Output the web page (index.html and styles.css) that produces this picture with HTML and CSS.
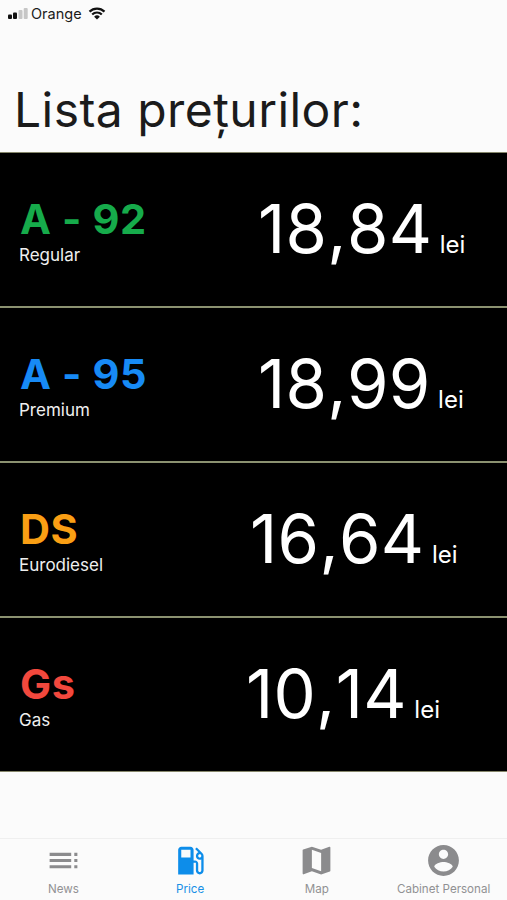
FILE: index.html
```html
<!DOCTYPE html>
<html lang="ro">
<head>
<meta charset="utf-8">
<title>Lista prețurilor</title>
<link rel="stylesheet" href="styles.css">
</head>
<body>
<div class="status">
  <svg class="signal" viewBox="0 0 20 12"><rect x="0" y="6.5" width="4" height="4.5" rx="1"/><rect x="5" y="4.5" width="4" height="6.5" rx="1"/><rect class="dim" x="10.5" y="2" width="4" height="9" rx="1"/><rect class="dim" x="15.7" y="0" width="4" height="11" rx="1"/></svg>
  <span class="carrier">Orange</span>
  <svg class="wifi" viewBox="0 0 18 13"><path d="M1.5 4.6a10.8 10.8 0 0 1 15 0M4.2 7.5a6.8 6.8 0 0 1 9.6 0"/><path class="dot" d="M9 12.5 6.1 9.8a4.1 4.1 0 0 1 5.8 0z"/></svg>
</div>
<h1 class="title">Lista prețurilor:</h1>
<main class="list">
  <section class="row">
    <div class="fuel"><div class="name green">A - 92</div><div class="kind">Regular</div></div>
    <div class="cost"><span class="price">18,84</span><span class="unit">lei</span></div>
  </section>
  <section class="row">
    <div class="fuel"><div class="name blue">A - 95</div><div class="kind">Premium</div></div>
    <div class="cost"><span class="price">18,99</span><span class="unit">lei</span></div>
  </section>
  <section class="row">
    <div class="fuel"><div class="name amber">DS</div><div class="kind">Eurodiesel</div></div>
    <div class="cost shift-ds"><span class="price">16,64</span><span class="unit">lei</span></div>
  </section>
  <section class="row">
    <div class="fuel"><div class="name red">Gs</div><div class="kind">Gas</div></div>
    <div class="cost shift-gs"><span class="price">10,14</span><span class="unit">lei</span></div>
  </section>
</main>
<nav class="tabs">
  <div class="tab">
    <svg viewBox="0 0 24 24"><path d="M3 9h14V7H3v2zm0 4h14v-2H3v2zm0 4h14v-2H3v2zm16 0h2v-2h-2v2zm0-10v2h2V7h-2zm0 6h2v-2h-2v2z"/></svg>
    <span>News</span>
  </div>
  <div class="tab active">
    <svg viewBox="0 0 24 24"><path d="M19.77 7.23l.01-.01-3.72-3.72L15 4.56l2.11 2.11c-.94.36-1.61 1.26-1.61 2.33 0 1.38 1.12 2.5 2.5 2.5.36 0 .69-.08 1-.21v7.21c0 .55-.45 1-1 1s-1-.45-1-1V14c0-1.1-.9-2-2-2h-1V5c0-1.1-.9-2-2-2H6c-1.1 0-2 .9-2 2v16h10v-7.500h1.500v5c0 1.380 1.120 2.500 2.500 2.500s2.500-1.120 2.500-2.500V9c0-.69-.28-1.320-.73-1.770zM12 10H6V5h6v5zm6 0c-.55 0-1-.45-1-1s.45-1 1-1 1 .45 1 1-.45 1-1 1z"/></svg>
    <span>Price</span>
  </div>
  <div class="tab">
    <svg viewBox="0 0 24 24"><path d="M20.500 3l-.16.03L15 5.100 9 3 3.360 4.900c-.21.07-.36.25-.36.48V20.500c0 .28.22.5.5.5l.16-.03L9 18.900l6 2.100 5.640-1.900c.21-.07.36-.25.36-.48V3.500c0-.28-.22-.5-.5-.5zM15 19l-6-2.110V5l6 2.110V19z"/></svg>
    <span>Map</span>
  </div>
  <div class="tab">
    <svg viewBox="0 0 24 24"><path d="M12 2C6.480 2 2 6.480 2 12s4.480 10 10 10 10-4.480 10-10S17.520 2 12 2zm0 3c1.660 0 3 1.340 3 3s-1.340 3-3 3-3-1.340-3-3 1.340-3 3-3zm0 14.200c-2.500 0-4.710-1.280-6-3.220.03-1.990 4-3.080 6-3.080 1.990 0 5.970 1.090 6 3.080-1.290 1.940-3.500 3.220-6 3.220z"/></svg>
    <span>Cabinet Personal</span>
  </div>
</nav>
</body>
</html>
```
FILE: styles.css
```css
* { box-sizing: border-box; }
body {
  margin: 0;
  width: 507px;
  height: 900px;
  overflow: hidden;
  display: flex;
  flex-direction: column;
  background: #fbfbfb;
  color: #1b1b1b;
  font-family: Inter, "Liberation Sans", sans-serif;
}
.status {
  height: 28px;
  display: flex;
  align-items: center;
  padding-left: 8px;
}
.signal { width: 20px; height: 12px; fill: #111; }
.signal .dim { fill: #c6c6c6; }
.carrier { width: 51px; margin: 0 6px 0 3px; font-size: 14.5px; line-height: 20px; }
.wifi { width: 18px; height: 13px; margin-top: -2px; fill: none; stroke: #111; stroke-width: 2.2; }
.wifi .dot { fill: #111; stroke: none; }
.title {
  height: 124px;
  margin: 0;
  padding: 52px 0 0 14px;
  font-size: 48px;
  line-height: 60px;
  font-weight: 400;
  letter-spacing: 0.45px;
  white-space: nowrap;
}
.list {
  height: 620px;
  background: #000;
  border-top: 1px solid #85866a;
  border-bottom: 1px solid #85866a;
}
.row {
  height: 155px;
  display: flex;
  border-bottom: 2px solid #8b9170;
}
.row:last-child { border-bottom: 0; }
.fuel { width: 240px; padding: 41px 0 0 19px; }
.name { padding-left: 1px; font-size: 41.5px; line-height: 50px; font-weight: 650; letter-spacing: 0.6px; }
.green { color: #16ab4b; }
.blue { color: #178af5; }
.amber { color: #fa9f14; }
.red { color: #f2483d; }
.kind { color: #efefef; font-size: 17px; line-height: 22px; }
.cost {
  padding: 36px 0 0 18px;
  color: #fff;
  line-height: 80px;
  white-space: nowrap;
}
.shift-ds { padding-left: 10px; }
.shift-gs { padding-left: 6px; }
.price { font-size: 67px; font-kerning: none; letter-spacing: 0.3px; }
.unit { margin-left: 7.5px; font-size: 24px; line-height: 1; }
.tabs {
  height: 62px;
  margin-top: auto;
  display: flex;
  border-top: 1px solid #efefef;
  color: #919193;
}
.tab {
  flex: 1;
  display: flex;
  flex-direction: column;
  align-items: center;
  padding-top: 3px;
  font-size: 11.6px;
  line-height: 16px;
  white-space: nowrap;
}
.tab svg { width: 37px; height: 37px; margin-bottom: 2px; fill: #8b8b8d; }
.active { color: #1890e6; }
.active svg { fill: #0d8dea; }
```
